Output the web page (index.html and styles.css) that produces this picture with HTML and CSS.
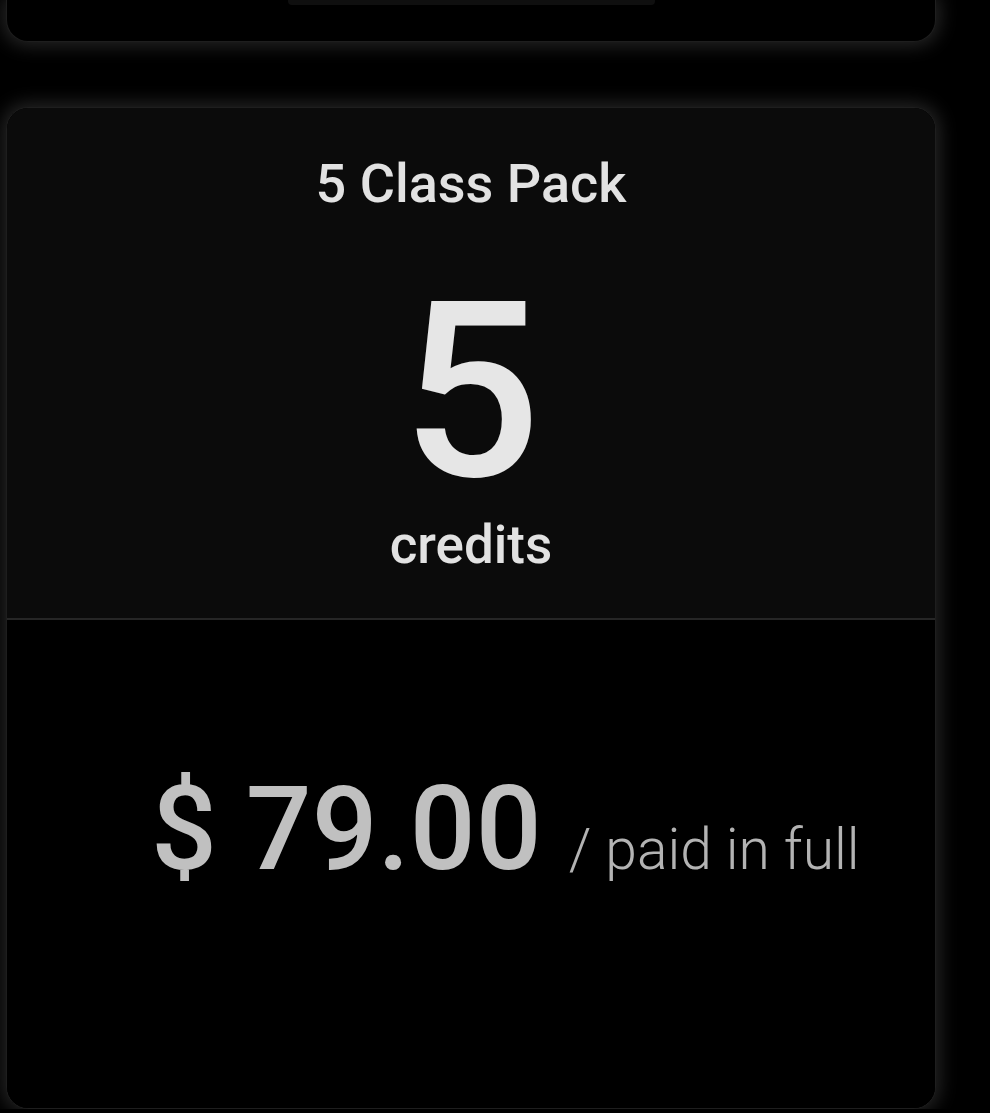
FILE: index.html
```html
<!DOCTYPE html>
<html lang="en">
<head>
<meta charset="utf-8">
<title>5 Class Pack</title>
<link rel="stylesheet" href="styles.css">
</head>
<body>
<div class="page">
  <div class="card card-prev">
    <div class="prev-button"></div>
  </div>
  <div class="card card-pack">
    <div class="pack-head">
      <div class="pack-title">5 Class Pack</div>
      <div class="pack-credits">5</div>
      <div class="pack-unit">credits</div>
    </div>
    <div class="pack-body">
      <div class="price-row">
        <span class="price">$ 79.00</span>
        <span class="price-note">/ paid in full</span>
      </div>
    </div>
  </div>
</div>
</body>
</html>
```

FILE: styles.css
```css
html, body {
  margin: 0;
  padding: 0;
  background: #000;
}

body {
  font-family: Roboto, "Noto Sans", "Liberation Sans", sans-serif;
  color: #e6e6e6;
  overflow: hidden;
}

.page {
  display: flex;
  flex-direction: column;
  gap: 65px;
  padding-left: 6px;
  width: 930px;
}

.card {
  background: #000;
  box-sizing: border-box;
  box-shadow: 0 0 18px 4px rgba(62, 62, 62, 0.6);
  border: 1px solid #1e1e1e;
}

.card-prev {
  height: 42px;
  border-top: none;
  border-radius: 0 0 22px 22px;
  display: flex;
  justify-content: center;
}

.prev-button {
  width: 367px;
  height: 5px;
  background: #0f0f0f;
  border-radius: 0 0 4px 4px;
}

.card-pack {
  height: 1002px;
  border-radius: 22px;
  overflow: hidden;
  display: flex;
  flex-direction: column;
}

.pack-head {
  height: 512px;
  box-sizing: border-box;
  background: #0b0b0b;
  border-bottom: 2px solid #262626;
  padding-top: 45px;
  display: flex;
  flex-direction: column;
  align-items: center;
}

.pack-title {
  font-size: 54px;
  line-height: 62px;
  font-weight: 500;
  color: #e2e2e2;
}

.pack-credits {
  margin-top: 56px;
  font-size: 245px;
  line-height: 243px;
  font-weight: 500;
  color: #e6e6e6;
}

.pack-unit {
  font-size: 53px;
  line-height: 62px;
  font-weight: 500;
  color: #e2e2e2;
}

.pack-body {
  flex: 1;
  background: #000;
  padding-top: 151px;
  padding-left: 144px;
}

.price-row {
  display: flex;
  align-items: baseline;
}

.price {
  font-size: 116px;
  line-height: 116px;
  font-weight: 500;
  color: #c0c0c0;
}

.price-note {
  margin-left: 27px;
  font-size: 57px;
  font-weight: 300;
  color: #b3b3b3;
}
```
